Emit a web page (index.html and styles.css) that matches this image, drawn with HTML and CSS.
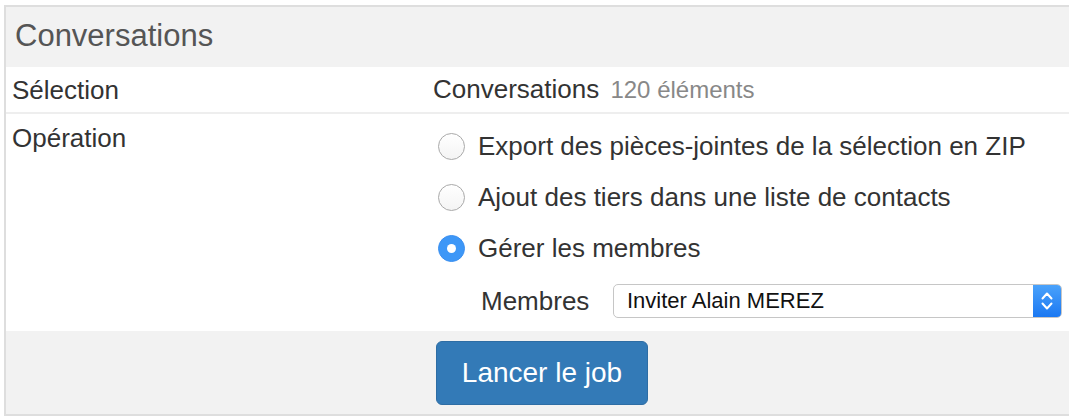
FILE: index.html
```html
<!DOCTYPE html>
<html lang="fr">
<head>
    <meta charset="UTF-8">
    <meta name="viewport" content="width=device-width, initial-scale=1.0">
    <title>Conversations</title>
    <link rel="stylesheet" href="styles.css">
</head>
<body>
    <div class="panel">
        <div class="panel-heading">Conversations</div>

        <div class="row row-selection">
            <div class="label">Sélection</div>
            <div class="value">Conversations <span class="count">120 éléments</span></div>
        </div>

        <div class="row row-operation">
            <div class="label label-top">Opération</div>
            <div class="options">
                <label class="option">
                    <span class="radio"></span>
                    Export des pièces-jointes de la sélection en ZIP
                </label>
                <label class="option">
                    <span class="radio"></span>
                    Ajout des tiers dans une liste de contacts
                </label>
                <label class="option">
                    <span class="radio checked"></span>
                    Gérer les membres
                </label>
                <div class="members">
                    <span class="members-label">Membres</span>
                    <div class="select">
                        <span class="select-text">Inviter Alain MEREZ</span>
                        <span class="select-arrows">
                            <svg width="14" height="22" viewBox="0 0 14 22">
                                <path d="M2.5 8.5 L7 3.5 L11.5 8.5" fill="none" stroke="#fff" stroke-width="2" stroke-linecap="round" stroke-linejoin="round"/>
                                <path d="M2.5 13.5 L7 18.5 L11.5 13.5" fill="none" stroke="#fff" stroke-width="2" stroke-linecap="round" stroke-linejoin="round"/>
                            </svg>
                        </span>
                    </div>
                </div>
            </div>
        </div>

        <div class="panel-footer">
            <button class="btn">Lancer le job</button>
        </div>
    </div>
</body>
</html>
```

FILE: styles.css
```css
* {
    box-sizing: border-box;
    margin: 0;
    padding: 0;
}

body {
    font-family: "Liberation Sans", Arial, sans-serif;
    font-size: 26px;
    color: #333;
    background-color: #fff;
    overflow: hidden;
}

.panel {
    margin: 5px -20px 0 4px;
    border: 2px solid #dedede;
    border-right: none;
}

.panel-heading {
    background-color: #f2f2f2;
    color: #555;
    font-size: 31px;
    height: 60px;
    line-height: 58px;
    padding-left: 9px;
}

.row {
    display: grid;
    grid-template-columns: 421px 1fr;
    padding-left: 6px;
}

.row-selection {
    height: 47px;
    align-items: center;
    border-bottom: 2px solid #eeeeee;
}

.label {
    line-height: 30px;
}

.label-top {
    padding-top: 9px;
}

.value {
    line-height: 30px;
}

.count {
    font-size: 24px;
    color: #888;
    margin-left: 4px;
}

.row-operation {
    padding-bottom: 13px;
}

.options {
    display: flex;
    flex-direction: column;
    gap: 21px;
    padding-top: 17px;
}

.option {
    display: flex;
    align-items: center;
    line-height: 30px;
    padding-left: 5px;
}

.radio {
    width: 27px;
    height: 27px;
    border-radius: 50%;
    border: 1px solid #a9a9a9;
    background: linear-gradient(#fff, #f4f4f4);
    margin-right: 13px;
    flex-shrink: 0;
}

.radio.checked {
    border-color: #3a8ff0;
    background: #3d97f7;
    position: relative;
}

.radio.checked::after {
    content: "";
    position: absolute;
    width: 9px;
    height: 9px;
    border-radius: 50%;
    background: #fff;
    top: 8px;
    left: 8px;
}

.members {
    display: flex;
    align-items: center;
    padding-left: 48px;
}

.members-label {
    width: 132px;
    line-height: 34px;
}

.select {
    width: 449px;
    height: 34px;
    border: 1px solid #c6c6c6;
    border-radius: 5px;
    display: flex;
    align-items: center;
    justify-content: space-between;
    background: #fff;
    overflow: hidden;
}

.select-text {
    font-size: 22px;
    color: #111;
    padding-left: 13px;
}

.select-arrows {
    width: 28px;
    height: 100%;
    background: linear-gradient(#4aa2fb, #1b78f2);
    display: flex;
    align-items: center;
    justify-content: center;
}

.panel-footer {
    background-color: #f2f2f2;
    padding: 10px 0 9px 430px;
}

.btn {
    width: 212px;
    height: 64px;
    font-family: "Liberation Sans", Arial, sans-serif;
    font-size: 28px;
    color: #fff;
    background-color: #337ab7;
    border: 1px solid #2e6da4;
    border-radius: 6px;
    cursor: pointer;
}
```
